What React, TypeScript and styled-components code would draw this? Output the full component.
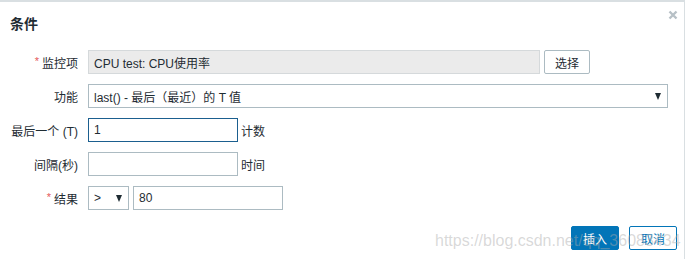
import styled, { createGlobalStyle } from "styled-components";

const GlobalStyle = createGlobalStyle`
  html, body {
    margin: 0;
    padding: 0;
    background: #ffffff;
  }
  body {
    font-family: "Liberation Sans", Arial, "Noto Sans CJK SC", sans-serif;
    font-size: 12px;
    color: #1f2c33;
  }
`;

const Dialog = styled.div`
  position: relative;
  width: 685px;
  height: 259px;
  box-sizing: border-box;
  border-top: 2px solid #d9dfe2;
  border-right: 1px solid #d9dfe2;
  background: #ffffff;
`;

const Header = styled.h4`
  margin: 0;
  padding: 13px 10px 0;
  height: 35px;
  box-sizing: border-box;
  font-size: 14px;
  line-height: 18px;
  font-weight: 600;
  color: #1f2c33;
`;

const Close = styled.button`
  position: absolute;
  top: 7px;
  right: 5px;
  width: 12px;
  height: 12px;
  padding: 0;
  border: 0;
  background: none;
  cursor: pointer;
`;

const Form = styled.div`
  display: grid;
  grid-template-columns: 68px 1fr;
  column-gap: 10px;
  row-gap: 10px;
  padding: 13px 10px 0;
`;

const Label = styled.label`
  display: flex;
  align-items: center;
  justify-content: flex-end;
  height: 24px;
  white-space: nowrap;
  color: #1f2c33;
`;

const Asterisk = styled.span`
  color: #e45959;
  font-size: 11px;
  margin-right: 3px;
  position: relative;
  top: -1px;
`;

const Field = styled.div`
  display: flex;
  align-items: center;
  gap: 4px;
  height: 24px;
`;

const Input = styled.div<{ $w: number; $readonly?: boolean; $focus?: boolean }>`
  width: ${(p) => p.$w}px;
  height: 24px;
  box-sizing: border-box;
  padding: 0 5px;
  display: flex;
  align-items: center;
  border: 1px solid
    ${(p) => (p.$focus ? "#1b5f8f" : p.$readonly ? "#d5d9db" : "#acbbc2")};
  background: ${(p) => (p.$readonly ? "#ebebeb" : "#ffffff")};
  color: #1f2c33;
  white-space: nowrap;
`;

const Select = styled(Input)`
  justify-content: space-between;
  padding-right: 6px;
`;

const Arrow = styled.span`
  width: 0;
  height: 0;
  border-left: 3.5px solid transparent;
  border-right: 3.5px solid transparent;
  border-top: 7px solid #1f2c33;
`;

const Hint = styled.span`
  margin-left: -1px;
  color: #1f2c33;
`;

const Button = styled.button<{ $primary?: boolean }>`
  width: 48px;
  height: 24px;
  padding: 0;
  box-sizing: border-box;
  font-family: inherit;
  font-size: 12px;
  border-radius: 2px;
  cursor: pointer;
  border: 1px solid ${(p) => (p.$primary ? "#0275b8" : "#0275b8")};
  background: ${(p) => (p.$primary ? "#0275b8" : "#ffffff")};
  color: ${(p) => (p.$primary ? "#ffffff" : "#0275b8")};
`;

const SelectButton = styled.button`
  width: 46px;
  height: 24px;
  padding: 0;
  box-sizing: border-box;
  font-family: inherit;
  font-size: 12px;
  color: #1f2c33;
  background: #ffffff;
  border: 1px solid #acbbc2;
  border-radius: 2px;
`;

const Footer = styled.div`
  display: flex;
  justify-content: flex-end;
  gap: 10px;
  padding: 16px 7px 0 0;
`;

const Watermark = styled.div`
  position: absolute;
  left: 435px;
  top: 230px;
  font-family: "Liberation Sans", Arial, sans-serif;
  font-size: 16px;
  color: rgba(170, 170, 170, 0.45);
  pointer-events: none;
  white-space: nowrap;
`;

const Required = () => <Asterisk>*</Asterisk>;

export default function App() {
  return (
    <>
      <GlobalStyle />
      <Dialog>
        <Header>条件</Header>
        <Close aria-label="close">
          <svg width="12" height="12" viewBox="0 0 12 12">
            <path
              d="M2.5 2.5 L9.5 9.5 M9.5 2.5 L2.5 9.5"
              stroke="#b7c0c6"
              strokeWidth="2.4"
            />
          </svg>
        </Close>
        <Form>
          <Label>
            <Required />
            监控项
          </Label>
          <Field>
            <Input $w={452} $readonly>
              CPU test: CPU使用率
            </Input>
            <SelectButton>选择</SelectButton>
          </Field>

          <Label>功能</Label>
          <Field>
            <Select $w={580}>
              last() - 最后（最近）的 T 值
              <Arrow />
            </Select>
          </Field>

          <Label>最后一个 (T)</Label>
          <Field>
            <Input $w={150} $focus>
              1
            </Input>
            <Hint>计数</Hint>
          </Field>

          <Label>间隔(秒)</Label>
          <Field>
            <Input $w={150} />
            <Hint>时间</Hint>
          </Field>

          <Label>
            <Required />
            结果
          </Label>
          <Field>
            <Select $w={41}>
              &gt;
              <Arrow />
            </Select>
            <Input $w={150}>80</Input>
          </Field>
        </Form>
        <Footer>
          <Button $primary>插入</Button>
          <Button>取消</Button>
        </Footer>
        <Watermark>https://blog.csdn.net/qq_36083434</Watermark>
      </Dialog>
    </>
  );
}
